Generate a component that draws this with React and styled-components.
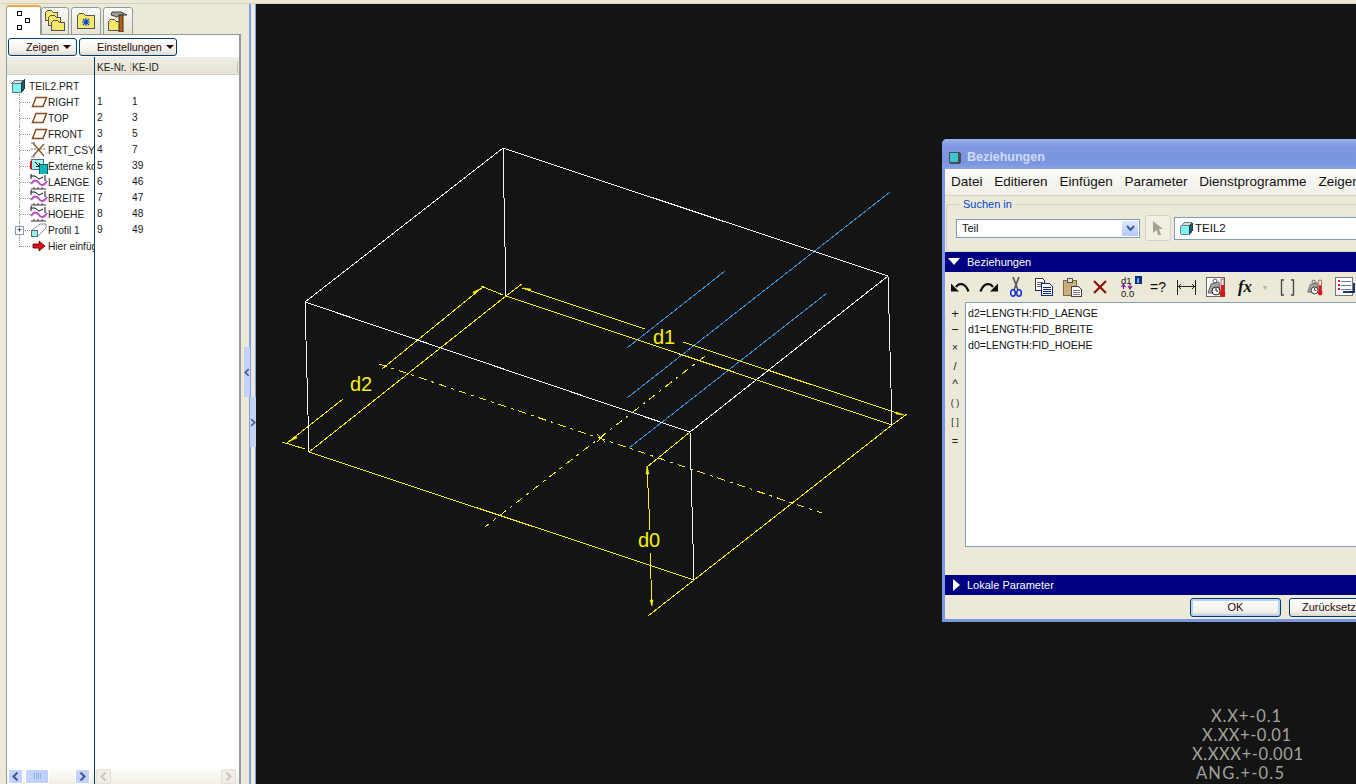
import React from 'react';
import styled, { createGlobalStyle } from 'styled-components';

const GlobalStyle = createGlobalStyle`
html, body {
  margin: 0;
  padding: 0;
  background: #ece9d8;
}
* { box-sizing: border-box; }
`
const Page = styled.div`
width: 1356px;
height: 784px;
overflow: hidden;
display: flex;
flex-direction: column;
font-family: "Liberation Sans", Arial, sans-serif;
color: #111;
`
const TopStrip = styled.div`
height: 4px;
flex: none;
background: #ece9d8;
border-bottom: 1px solid #d4d0bd;
`
const Main = styled.div`
flex: 1;
display: flex;
min-height: 0;
`
const LeftPanel = styled.div`
width: 243px;
flex: none;
background: #ece9d8;
padding: 1px 2px 0 6px;
display: flex;
flex-direction: column;
`
const Tabs = styled.div`
display: flex;
height: 30px;
flex: none;
`
const Tab = styled.div`
width: ${p => p.$w}px;
margin-left: ${p => p.$gap || 0}px;
display: flex;
align-items: center;
justify-content: center;
background: ${p => p.$active ? '#fff' : 'linear-gradient(#fbfbf7, #e6e3d6)'};
border: 1px solid #919b9c;
border-bottom: ${p => p.$active ? 'none' : '1px solid #919b9c'};
border-top: ${p => p.$active ? '2px solid #f2a93b' : '1px solid #919b9c'};
border-radius: 3px 3px 0 0;
margin-top: ${p => p.$active ? '0' : '2px'};
height: ${p => p.$active ? '30px' : '28px'};
position: relative;
z-index: ${p => p.$active ? 1 : 0};
`
const TabBody = styled.div`
flex: 1;
min-height: 0;
margin-top: -1px;
background: #fff;
border-left: 1px solid #919b9c;
border-right: 2px solid #919b9c;
display: flex;
flex-direction: column;
`
const ButtonRow = styled.div`
flex: none;
height: 23px;
display: flex;
gap: 2px;
padding: 3px 0 0 1px;
border-top: 1px solid #919b9c;
`
const MenuButton = styled.div`
width: ${p => p.$w}px;
height: 18px;
border: 1px solid #003c74;
border-radius: 3px;
background: linear-gradient(#ffffff, #f2f1ea 70%, #dedbcf);
display: flex;
align-items: center;
gap: 4px;
padding-left: 17px;
font-size: 10.8px;
color: #2a0808;
`
const Caret = styled.span`
width: 0;
height: 0;
border-left: 4px solid transparent;
border-right: 4px solid transparent;
border-top: 4px solid #2a0808;
`
const TreeTable = styled.div`
flex: 1;
min-height: 0;
display: flex;
`
const TreeColumn = styled.div`
display: flex;
flex-direction: column;
width: ${p => p.$w ? p.$w + 'px' : 'auto'};
flex: ${p => p.$w ? 'none' : 1};
min-width: 0;
border-right: ${p => p.$divider ? '1px solid #0b3a63' : 'none'};
`
const HeaderCell = styled.div`
flex: none;
height: 18px;
padding: 3px 0 0 1px;
background: linear-gradient(#f1efe4, #e6e3d4);
border-bottom: 1px solid #d5d2c2;
display: flex;
align-items: center;
font-size: 10px;
color: #222;
`
const HeaderLabel = styled.span`
width: ${p => p.$w}px;
padding-left: 1px;
border-right: 1px solid #c6c3b4;
line-height: 11px;
`
const TreeList = styled.div`
flex: 1;
min-height: 0;
padding-top: 3px;
overflow: hidden;
`
const TreeRow = styled.div`
height: 16px;
display: flex;
align-items: center;
padding-left: ${p => p.$root ? 4 : 12}px;
font-size: 10.2px;
white-space: nowrap;
overflow: hidden;
color: #1a1a1a;
`
const TreeLabel = styled.span`
flex: 1;
min-width: 0;
overflow: hidden;
`
const Connector = styled.span`
position: relative;
flex: none;
align-self: flex-start;
width: 11px;
height: ${p => p.$last ? 9 : 16}px;
border-left: 1px dotted #9a9a8a;
&::after {
  content: '';
  position: absolute;
  left: 0;
  right: 0;
  top: 8px;
  border-top: 1px dotted #9a9a8a;
}
`
const PlusBox = styled.span`
position: absolute;
z-index: 1;
left: -5px;
top: 4px;
width: 9px;
height: 9px;
background: #fff;
border: 1px solid #7f9db9;
font-size: 9px;
line-height: 6px;
text-align: center;
color: #000;
`
const RowIcon = styled.span`
flex: none;
width: 18px;
height: 16px;
display: flex;
align-items: center;
justify-content: ${p => p.$root ? 'flex-start' : 'center'};
`
const ValueRow = styled.div`
height: 16px;
display: flex;
font-size: 10.2px;
line-height: 16px;
padding-left: 2px;
color: #1a1a1a;
`
const ValueCell = styled.span`
width: ${p => p.$w}px;
`
const ScrollBar = styled.div`
flex: none;
height: 16px;
display: flex;
align-items: center;
background: linear-gradient(#fefefd, #f0eee4);
padding: 0 1px;
`
const ScrollButton = styled.div`
width: 15px;
height: 15px;
display: flex;
align-items: center;
justify-content: center;
border-radius: 2px;
margin-left: ${p => p.$left || 0}px;
background: ${p => p.$off ? '#f0eee6' : '#c3d3fc'};
border: 1px solid ${p => p.$off ? '#e2e0d6' : '#fff'};
`
const ScrollThumb = styled.div`
width: 24px;
height: 15px;
margin-left: 2px;
border-radius: 2px;
border: 1px solid #fff;
background: linear-gradient(90deg, #c5d5fc, #bccffb);
display: flex;
align-items: center;
justify-content: center;
gap: 1px;
`
const Grip = styled.span`
width: 1px;
height: 6px;
background: #8fb0ee;
`
const Sash = styled.div`
width: 13px;
flex: none;
padding-top: 343px;
display: flex;
flex-direction: column;
background: linear-gradient(90deg,
  #ece9d8 0, #ece9d8 6px, #7f9de3 6px, #7f9de3 8px,
  #ece9d8 8px, #ece9d8 12px, #7f9de3 12px);
`
const SashHandle = styled.div`
width: 6px;
height: 50px;
margin-left: ${p => p.$right ? 7 : 1}px;
background: #c3d3fc;
display: flex;
align-items: center;
justify-content: center;
`
const Canvas = styled.div`
flex: 1;
position: relative;
overflow: hidden;
background: #141414;
`
const Drawing = styled.svg`
display: block;
width: 1100px;
height: 780px;
`
const Dialog = styled.div`
position: absolute;
left: 686px;
top: 135px;
width: 450px;
height: 483px;
background: #ece9d8;
border-radius: 5px 5px 0 0;
border: 3px solid #7c97e0;
border-top: none;
display: flex;
flex-direction: column;
`
const TitleBar = styled.div`
flex: none;
height: 30px;
margin: 0 -3px;
padding: 6px 0 0 6px;
border-radius: 5px 5px 0 0;
background: linear-gradient(#9ab2ee, #7d98e0 25%, #7a95df 80%, #8aa3e6);
display: flex;
align-items: center;
gap: 6px;
font-size: 12.5px;
font-weight: bold;
color: #cfdaf6;
`
const MenuBar = styled.div`
flex: none;
height: 27px;
padding: 0 0 1px 6px;
background: linear-gradient(#fbfbf8, #f1efe6);
border-bottom: 1px solid #d6d3c2;
display: flex;
align-items: center;
gap: 11.8px;
font-size: 13.5px;
white-space: nowrap;
`
const SearchGroup = styled.fieldset`
flex: none;
margin: 2px 0 0 1px;
padding: 5px 10px 0 9px;
height: 54px;
border: 1px solid #d0d0bf;
border-right: none;
border-radius: 4px 0 0 4px;
display: flex;
align-items: center;
gap: 5px;
min-inline-size: 0;
`
const GroupCaption = styled.legend`
margin-left: 4px;
padding: 0 3px;
font-size: 11px;
color: #0046d5;
`
const SelectBox = styled.div`
width: 184px;
height: 19px;
flex: none;
background: #fff;
border: 1px solid #7f9db9;
display: flex;
align-items: center;
justify-content: space-between;
padding: 0 1px 0 5px;
font-size: 11px;
`
const SelectArrow = styled.span`
width: 16px;
height: 15px;
display: flex;
align-items: center;
justify-content: center;
background: linear-gradient(#dfe8fd, #b4c8f6);
border-radius: 1px;
`
const PickButton = styled.div`
width: 26px;
height: 26px;
flex: none;
border: 1px solid #d4d1c0;
border-radius: 3px;
background: #f1efe4;
display: flex;
align-items: center;
justify-content: center;
`
const NameField = styled.div`
flex: none;
width: 240px;
height: 23px;
margin-left: -2px;
background: #fff;
border: 1px solid #7f9db9;
display: flex;
align-items: center;
gap: 2px;
padding-left: 5px;
font-size: 11.5px;
`
const SectionBar = styled.div`
flex: none;
height: 20px;
background: #000080;
color: #fff;
display: flex;
align-items: center;
gap: 7px;
padding-left: ${p => p.$closed ? 8 : 3}px;
font-size: 11px;
`
const Toolbar = styled.div`
flex: none;
height: 30px;
display: flex;
align-items: center;
padding-left: 1px;
`
const ToolSlot = styled.span`
flex: none;
width: ${p => p.$w}px;
display: flex;
justify-content: center;
align-items: center;
font-size: ${p => p.$size || 14}px;
`
const MathGlyph = styled.span`
font-family: "Liberation Serif", serif;
font-style: italic;
font-weight: bold;
`
const ArrowGlyph = styled.span`
color: #b5b3a5;
`
const EditorRow = styled.div`
flex: none;
height: 245px;
display: flex;
margin-bottom: 28px;
`
const SymbolColumn = styled.div`
flex: none;
width: 20px;
padding-top: 3px;
display: flex;
flex-direction: column;
`
const SymbolKey = styled.span`
height: ${p => p.$h}px;
display: flex;
align-items: center;
justify-content: center;
font-size: ${p => p.$size}px;
color: #222;
`
const Editor = styled.div`
flex: 1;
background: #fff;
border: 1px solid #7f9db9;
padding: 2px 2px;
font-size: 10.6px;
line-height: 16px;
color: #111;
`
const Footer = styled.div`
flex: 1;
display: flex;
justify-content: flex-end;
align-items: center;
gap: 8px;
padding-right: 8px;
`
const DialogButton = styled.div`
width: ${p => p.$w}px;
height: 19px;
border: 1px solid #003c74;
border-radius: 3px;
background: linear-gradient(#ffffff, #f3f2ec 70%, #dcd8ca);
box-shadow: ${p => p.$primary ? 'inset 0 0 0 2px #bcd0f2' : 'none'};
display: flex;
align-items: center;
justify-content: center;
font-size: 11px;
color: #2a0808;
`

const Y = '#f5ee10';
const BLUE = '#3a8fd6';
const WHITE = '#f4f4f4';

const whiteLines = [
  [503, 148, 305, 302], [305, 302, 690, 432], [690, 432, 888, 276], [888, 276, 503, 148],
  [503, 148, 506, 296], [305, 302, 309, 452], [690, 432, 694, 580], [888, 276, 892, 425],
];
const yellowLines = [
  [309, 452, 694, 580], [694, 580, 892, 425], [309, 452, 506, 296], [506, 296, 892, 425],
  [282, 442, 305, 449], [481, 286, 503, 295], [506, 296, 522, 284], [892, 425, 907, 414],
  [287, 443, 343, 399], [382, 369, 483, 287],
  [522, 288, 645, 329], [683, 342, 903, 415],
  [690, 432, 647, 467], [647, 467, 650, 530], [650, 553, 652, 605], [694, 580, 648, 616],
];
const blueLines = [
  [627, 348, 725, 271], [627, 398, 890, 192], [629, 448, 827, 293],
];
const tolerances = [
  { text: 'X.X+-0.1', x: 1211, y: 722, w: 70 },
  { text: 'X.XX+-0.01', x: 1202, y: 741, w: 89 },
  { text: 'X.XXX+-0.001', x: 1192, y: 760, w: 111 },
  { text: 'ANG.+-0.5', x: 1196, y: 779, w: 88 },
];

const Sketch = () => (
  <Drawing viewBox="256 4 1100 780">
    <g shapeRendering="crispEdges" strokeWidth="1">
      {blueLines.map((l, i) => <line key={i} x1={l[0]} y1={l[1]} x2={l[2]} y2={l[3]} stroke={BLUE} />)}
      {yellowLines.map((l, i) => <line key={i} x1={l[0]} y1={l[1]} x2={l[2]} y2={l[3]} stroke={Y} />)}
      <line x1="379" y1="364" x2="822" y2="513" stroke={Y} strokeDasharray="8 5 3 5" />
      <line x1="705" y1="356" x2="485" y2="527" stroke={Y} strokeDasharray="8 5 3 5" />
      <path d="M597 434 L605 442 M605 434 L597 442" stroke={Y} fill="none" />
      {whiteLines.map((l, i) => <line key={i} x1={l[0]} y1={l[1]} x2={l[2]} y2={l[3]} stroke={WHITE} />)}
    </g>
    <g fill={Y} stroke={Y} strokeWidth="0.6">
      <path d="M288 442 L296 436 L297 438 Z" />
      <path d="M482 288 L474 294 L473 292 Z" />
      <path d="M523 288 L531 289 L530 291 Z" />
      <path d="M904 415 L896 414 L896 412 Z" />
      <path d="M647 466 L646 474 L649 474 Z" />
      <path d="M652 606 L650 600 L653 600 Z" />
    </g>
    <g fill={Y} fontFamily='"Liberation Sans", Arial, sans-serif' fontSize="20">
      <text x="653" y="344">d1</text>
      <text x="350" y="391">d2</text>
      <text x="638" y="547">d0</text>
    </g>
    <g fill="#a3a39a" fontFamily='"Lato", "Liberation Sans", sans-serif' fontSize="16.5">
      {tolerances.map(t => (
        <text key={t.text} x={t.x} y={t.y} textLength={t.w} lengthAdjust="spacing">{t.text}</text>
      ))}
    </g>
  </Drawing>
);

const CubeIcon = ({ size = 14 }) => (
  <svg width={size} height={size} viewBox="0 0 14 14" shapeRendering="crispEdges">
    <path d="M1 4 L4 1 L13 1 L13 10 L11 13 L1 13 Z" fill="#7ff2f2" stroke="#6a7a80" />
    <path d="M1 4 L4 1 L13 1 L10 4 Z" fill="#d5dde0" stroke="#6a7a80" />
    <path d="M10 4 L13 1 L13 10 L10 13 Z" fill="#1f5a66" stroke="#1f3a40" />
  </svg>
);
const PlaneIcon = () => (
  <svg width="17" height="12" viewBox="0 0 17 12">
    <path d="M5 1.5 L15.5 1.5 L12 10.5 L1.5 10.5 Z" fill="none" stroke="#8c4a1c" strokeWidth="1.5" />
  </svg>
);
const CsysIcon = () => (
  <svg width="18" height="16" viewBox="0 0 18 16" fill="none">
    <path d="M3 1 L14 14 M14 2 L3 14" stroke="#8c4a1c" strokeWidth="1.2" />
    <path d="M1 7 L9 7 L15 7" stroke="#777" strokeWidth="1" strokeDasharray="2 1" />
    <path d="M1 1 L5 1 M1 15 L5 15" stroke="#777" />
  </svg>
);
const ExternalIcon = () => (
  <svg width="18" height="16" viewBox="0 0 18 16" shapeRendering="crispEdges">
    <rect x="1" y="1" width="12" height="10" fill="#9ff3f3" stroke="#667" />
    <rect x="0" y="3" width="2" height="8" fill="#d01818" />
    <path d="M5 4 L9 8 M9 5 L9 8 L6 8" stroke="#111" fill="none" />
    <rect x="9" y="6" width="8" height="10" fill="#12b5b5" stroke="#0a5a5a" />
  </svg>
);
const DatumCurveIcon = () => (
  <svg width="18" height="16" viewBox="0 0 18 16" fill="none">
    <path d="M1 0 L1 5 M1 2 L5 2 M15 1 L15 7 M5 2 L9 5 L13 3" stroke="#111" strokeWidth="1" />
    <path d="M1 10 C4 5 7 6 9 9 S14 12 17 7" stroke="#c045d2" strokeWidth="2" />
    <path d="M1 15 L16 15 M4 13 L4 15 M8 13 L8 15 M12 13 L12 15" stroke="#333" strokeWidth="1" />
  </svg>
);
const ProfileIcon = () => (
  <svg width="18" height="16" viewBox="0 0 18 16" fill="none">
    <path d="M2 8 L10 2 L16 2 L16 6 L8 14 L2 14 Z" fill="#fff" stroke="#889" />
    <rect x="1.5" y="8.5" width="6" height="6" fill="#8ef2f2" stroke="#667" />
  </svg>
);
const InsertIcon = () => (
  <svg width="14" height="12" viewBox="0 0 14 12">
    <path d="M1 4 L7 4 L7 1 L13 6 L7 11 L7 8 L1 8 Z" fill="#e0101a" stroke="#500" strokeWidth="0.8" />
  </svg>
);
const TreeTabIcon = () => (
  <svg width="16" height="20" viewBox="0 0 16 20" fill="#fff" stroke="#111" shapeRendering="crispEdges">
    <rect x="1.5" y="0.5" width="4" height="4" />
    <rect x="1.5" y="14.5" width="4" height="4" />
    <rect x="9.5" y="7.5" width="4" height="4" />
  </svg>
);
const Folder = ({ x, y, w = 15, h = 12 }) => (
  <g shapeRendering="crispEdges">
    <path d={`M${x + .5} ${y + 2.5} L${x + 2.5} ${y + .5} L${x + 6.5} ${y + .5} L${x + 8.5} ${y + 2.5} L${x + w - .5} ${y + 2.5} L${x + w - .5} ${y + h - .5} L${x + .5} ${y + h - .5} Z`} fill="#f4e76a" stroke="#555" />
  </g>
);
const FoldersTabIcon = () => (
  <svg width="20" height="22" viewBox="0 0 20 22">
    <Folder x={0} y={0} w={13} h={11} />
    <Folder x={3} y={5} w={13} h={11} />
    <Folder x={6} y={10} w={14} h={11} />
  </svg>
);
const StarFolderIcon = () => (
  <svg width="20" height="18" viewBox="0 0 20 18">
    <Folder x={1} y={1} w={18} h={16} />
    <path d="M10 6 L10 14 M6 10 L14 10 M7 7 L13 13 M13 7 L7 13" stroke="#1540d8" strokeWidth="1.2" />
  </svg>
);
const ToolFolderIcon = () => (
  <svg width="20" height="21" viewBox="0 0 20 21">
    <Folder x={0} y={8} w={14} h={12} />
    <path d="M3 4 L4 1 L13 1 L19 4 L13 4 L9 6 Z" fill="#9a9a9a" stroke="#444" />
    <rect x="11" y="4" width="4" height="17" fill="#a8641e" stroke="#4a2a08" />
  </svg>
);
const Chevron = ({ dir = 'left', color = '#3b5a9a' }) => (
  <svg width="7" height="9" viewBox="0 0 7 9" fill="none" stroke={color} strokeWidth="2">
    <path d={dir === 'left' ? 'M5.5 .5 L1.5 4.5 L5.5 8.5' : 'M1.5 .5 L5.5 4.5 L1.5 8.5'} />
  </svg>
);
const DownChevron = () => (
  <svg width="9" height="7" viewBox="0 0 9 7" fill="none" stroke="#3b5a9a" strokeWidth="2">
    <path d="M1 1 L4.5 5 L8 1" />
  </svg>
);
const PointerIcon = () => (
  <svg width="12" height="16" viewBox="0 0 12 16">
    <path d="M1 1 L11 9 L7 9 L9 15 L6 15 L4.5 10 L1 13 Z" fill="#a5a28f" />
  </svg>
);
const WindowCube = () => (
  <svg width="13" height="13" viewBox="0 0 13 13" shapeRendering="crispEdges">
    <rect x="0.5" y="0.5" width="12" height="12" rx="1" fill="#4a4a50" />
    <rect x="2" y="2" width="8" height="9" fill="#38c8d0" />
  </svg>
);
const TriangleDown = () => (
  <svg width="12" height="8" viewBox="0 0 12 8"><path d="M0 0 L12 0 L6 7 Z" fill="#fff" /></svg>
);
const TriangleRight = () => (
  <svg width="7" height="12" viewBox="0 0 7 12"><path d="M0 0 L7 6 L0 12 Z" fill="#fff" /></svg>
);
const Undo = ({ flip }) => (
  <svg width="19" height="12" viewBox="0 0 19 12" style={flip ? { transform: 'scaleX(-1)' } : undefined}>
    <path d="M5 6 C8 1.5 14 1.5 17.5 10.5" fill="none" stroke="#111" strokeWidth="2.2" />
    <path d="M0 2.5 L0 10.5 L8 10.5 Z" fill="#111" />
  </svg>
);
const Scissors = () => (
  <svg width="12" height="20" viewBox="0 0 12 20" fill="none">
    <path d="M3 0 L8 13 M9 0 L4 13" stroke="#555" strokeWidth="1.6" />
    <ellipse cx="3" cy="16" rx="2.3" ry="3.2" stroke="#1133cc" strokeWidth="1.5" />
    <ellipse cx="9" cy="16" rx="2.3" ry="3.2" stroke="#1133cc" strokeWidth="1.5" />
  </svg>
);
const CopyIcon = () => (
  <svg width="18" height="18" viewBox="0 0 18 18" shapeRendering="crispEdges">
    <path d="M.5 .5 L7.5 .5 L9.5 2.5 L9.5 12.5 L.5 12.5 Z" fill="#fff" stroke="#333" />
    <path d="M2 4 H8 M2 6 H8 M2 8 H8" stroke="#666" />
    <path d="M6.5 5.5 L14.5 5.5 L17.5 8.5 L17.5 17.5 L6.5 17.5 Z" fill="#fff" stroke="#0a2a78" />
    <path d="M8 9 H16 M8 11 H16 M8 13 H16 M8 15 H16" stroke="#0a2a78" />
  </svg>
);
const PasteIcon = () => (
  <svg width="19" height="19" viewBox="0 0 19 19" shapeRendering="crispEdges">
    <rect x="0.5" y="2.5" width="13" height="15" fill="#c9ae7c" stroke="#7a6a50" />
    <rect x="4.5" y="0.5" width="5" height="4" fill="#ddd" stroke="#555" />
    <path d="M8.5 8.5 L15.5 8.5 L18.5 11.5 L18.5 18.5 L8.5 18.5 Z" fill="#fff" stroke="#444" />
    <path d="M10 12 H17 M10 14 H17 M10 16 H17" stroke="#777" />
  </svg>
);
const DeleteIcon = () => (
  <svg width="14" height="14" viewBox="0 0 14 14">
    <path d="M1 1 L13 13 M13 1 L1 13" stroke="#8c1010" strokeWidth="2.2" />
  </svg>
);
const SwitchIcon = () => (
  <svg width="23" height="22" viewBox="0 0 23 22">
    <text x="1" y="8" fontSize="9.5" fontFamily='"Liberation Sans", sans-serif' fill="#111">d1</text>
    <text x="1" y="21" fontSize="9.5" fontFamily='"Liberation Sans", sans-serif' fill="#111">0.0</text>
    <path d="M3.5 13 V9 M1.5 11 L3.5 8.5 L5.5 11 M10 8 V12 M8 10 L10 13 L12 10" stroke="#8a12a8" fill="none" strokeWidth="1.2" />
    <rect x="15" y="0" width="7" height="8" fill="#00308c" />
    <text x="17" y="7" fontSize="7" fontWeight="bold" fontFamily='"Liberation Sans", sans-serif' fill="#fff">i</text>
  </svg>
);
const DimIcon = () => (
  <svg width="19" height="15" viewBox="0 0 19 15" fill="none" stroke="#222" shapeRendering="crispEdges">
    <path d="M.5 0 V15 M18.5 0 V15 M1 6.5 H18 M4 4 L1.5 6.5 L4 9 M15 4 L17.5 6.5 L15 9" />
  </svg>
);
const ThermoIcon = ({ boxed }) => (
  <svg width="21" height="22" viewBox="0 0 21 22">
    {boxed && <rect x="0.5" y="1.5" width="18" height="19" fill="#fff" stroke="#666" />}
    <path d="M2 17 L5 8 L13 6 L14 17 Z" fill="#a4a4a4" stroke="#666" />
    <circle cx="9" cy="5" r="2" fill="none" stroke="#555" />
    <circle cx="10" cy="15" r="4" fill="#fff" stroke="#222" />
    <path d="M10 12 V15 H12" stroke="#222" fill="none" />
    <rect x="15" y="3" width="3" height="13" fill="#fff" stroke="#a01010" strokeWidth="0.7" />
    <rect x="15" y="9" width="3" height="8" fill="#d81818" />
    <circle cx="16.5" cy="18" r="2.8" fill="#d81818" />
  </svg>
);
const BracketIcon = () => (
  <svg width="15" height="17" viewBox="0 0 15 17" fill="none" stroke="#444" strokeWidth="1.3">
    <path d="M4 1 H1.5 V16 H4 M11 1 H13.5 V16 H11" />
  </svg>
);
const ListIcon = () => (
  <svg width="21" height="20" viewBox="0 0 21 20" shapeRendering="crispEdges">
    <rect x="0.5" y="0.5" width="17" height="18" fill="#fff" stroke="#777" />
    <path d="M6 4 H16 M6 8 H16 M6 12 H16" stroke="#5a7ab0" />
    <path d="M3 3 H5 V5 H3 Z M3 7 H5 V9 H3 Z M3 11 H5 V13 H3 Z" fill="#d81818" />
    <path d="M8 15 H19 V6" stroke="#1a3a6a" fill="none" strokeWidth="1.5" />
  </svg>
);

const features = [
  { icon: <PlaneIcon />, label: 'RIGHT', nr: 1, id: 1 },
  { icon: <PlaneIcon />, label: 'TOP', nr: 2, id: 3 },
  { icon: <PlaneIcon />, label: 'FRONT', nr: 3, id: 5 },
  { icon: <CsysIcon />, label: 'PRT_CSYS', nr: 4, id: 7 },
  { icon: <ExternalIcon />, label: 'Externe kopie', nr: 5, id: 39 },
  { icon: <DatumCurveIcon />, label: 'LAENGE', nr: 6, id: 46 },
  { icon: <DatumCurveIcon />, label: 'BREITE', nr: 7, id: 47 },
  { icon: <DatumCurveIcon />, label: 'HOEHE', nr: 8, id: 48 },
  { icon: <ProfileIcon />, label: 'Profil 1', nr: 9, id: 49, expand: true },
  { icon: <InsertIcon />, label: 'Hier einfügen', last: true },
];

const menus = ['Datei', 'Editieren', 'Einfügen', 'Parameter', 'Dienstprogramme', 'Zeigen'];
const symbols = [
  { s: '+', size: 13, h: 16 }, { s: '−', size: 13, h: 16 }, { s: '×', size: 10, h: 20 }, { s: '/', size: 11, h: 18 },
  { s: '^', size: 12, h: 18 }, { s: '( )', size: 9, h: 20 }, { s: '[ ]', size: 9, h: 18 }, { s: '=', size: 11, h: 20 },
];
const relations = ['d2=LENGTH:FID_LAENGE', 'd1=LENGTH:FID_BREITE', 'd0=LENGTH:FID_HOEHE'];

const App = () => {
  return (
    <Page>
      <GlobalStyle />
      <TopStrip />
      <Main>
        <LeftPanel>
          <Tabs>
            <Tab $w={35} $active><TreeTabIcon /></Tab>
            <Tab $w={28}><FoldersTabIcon /></Tab>
            <Tab $w={30} $gap={2}><StarFolderIcon /></Tab>
            <Tab $w={30} $gap={2}><ToolFolderIcon /></Tab>
          </Tabs>
          <TabBody>
            <ButtonRow>
              <MenuButton $w={69}>Zeigen <Caret /></MenuButton>
              <MenuButton $w={98}>Einstellungen <Caret /></MenuButton>
            </ButtonRow>
            <TreeTable>
              <TreeColumn $w={88} $divider>
                <HeaderCell />
                <TreeList>
                  <TreeRow $root>
                    <RowIcon $root><CubeIcon /></RowIcon>
                    <TreeLabel>TEIL2.PRT</TreeLabel>
                  </TreeRow>
                  {features.map(f => (
                    <TreeRow key={f.label}>
                      <Connector $last={f.last}>{f.expand && <PlusBox>+</PlusBox>}</Connector>
                      <RowIcon>{f.icon}</RowIcon>
                      <TreeLabel>{f.label}</TreeLabel>
                    </TreeRow>
                  ))}
                </TreeList>
                <ScrollBar>
                  <ScrollButton><Chevron /></ScrollButton>
                  <ScrollThumb><Grip /><Grip /><Grip /><Grip /></ScrollThumb>
                  <ScrollButton $left={26}><Chevron dir="right" /></ScrollButton>
                </ScrollBar>
              </TreeColumn>
              <TreeColumn>
                <HeaderCell>
                  <HeaderLabel $w={35}>KE-Nr.</HeaderLabel>
                  <HeaderLabel $w={107}>KE-ID</HeaderLabel>
                </HeaderCell>
                <TreeList>
                  <ValueRow />
                  {features.filter(f => f.nr).map(f => (
                    <ValueRow key={f.nr}>
                      <ValueCell $w={35}>{f.nr}</ValueCell>
                      <ValueCell $w={40}>{f.id}</ValueCell>
                    </ValueRow>
                  ))}
                </TreeList>
                <ScrollBar>
                  <ScrollButton $off><Chevron color="#c8c6ba" /></ScrollButton>
                  <ScrollButton $off $left={110}><Chevron dir="right" color="#c8c6ba" /></ScrollButton>
                </ScrollBar>
              </TreeColumn>
            </TreeTable>
          </TabBody>
        </LeftPanel>
        <Sash>
          <SashHandle><Chevron color="#4a5f94" /></SashHandle>
          <SashHandle $right><Chevron dir="right" color="#4a5f94" /></SashHandle>
        </Sash>
        <Canvas>
          <Sketch />
          <Dialog>
            <TitleBar><WindowCube />Beziehungen</TitleBar>
            <MenuBar>{menus.map(m => <span key={m}>{m}</span>)}</MenuBar>
            <SearchGroup>
              <GroupCaption>Suchen in</GroupCaption>
              <SelectBox>Teil<SelectArrow><DownChevron /></SelectArrow></SelectBox>
              <PickButton><PointerIcon /></PickButton>
              <NameField><CubeIcon size={13} />TEIL2</NameField>
            </SearchGroup>
            <SectionBar><TriangleDown />Beziehungen</SectionBar>
            <Toolbar>
              <ToolSlot $w={28}><Undo /></ToolSlot>
              <ToolSlot $w={28}><Undo flip /></ToolSlot>
              <ToolSlot $w={28}><Scissors /></ToolSlot>
              <ToolSlot $w={28}><CopyIcon /></ToolSlot>
              <ToolSlot $w={28}><PasteIcon /></ToolSlot>
              <ToolSlot $w={28}><DeleteIcon /></ToolSlot>
              <ToolSlot $w={34}><SwitchIcon /></ToolSlot>
              <ToolSlot $w={20} $size={14}>=?</ToolSlot>
              <ToolSlot $w={36}><DimIcon /></ToolSlot>
              <ToolSlot $w={24}><ThermoIcon boxed /></ToolSlot>
              <ToolSlot $w={34} $size={17}><MathGlyph>fx</MathGlyph></ToolSlot>
              <ToolSlot $w={6} $size={7}><ArrowGlyph>▼</ArrowGlyph></ToolSlot>
              <ToolSlot $w={38}><BracketIcon /></ToolSlot>
              <ToolSlot $w={18}><ThermoIcon /></ToolSlot>
              <ToolSlot $w={42}><ListIcon /></ToolSlot>
            </Toolbar>
            <EditorRow>
              <SymbolColumn>
                {symbols.map(k => <SymbolKey key={k.s} $size={k.size} $h={k.h}>{k.s}</SymbolKey>)}
              </SymbolColumn>
              <Editor>{relations.map(r => <div key={r}>{r}</div>)}</Editor>
            </EditorRow>
            <SectionBar $closed><TriangleRight />Lokale Parameter</SectionBar>
            <Footer>
              <DialogButton $w={91} $primary>OK</DialogButton>
              <DialogButton $w={92}>Zurücksetzen</DialogButton>
            </Footer>
          </Dialog>
        </Canvas>
      </Main>
    </Page>
  );
}

export default App;
